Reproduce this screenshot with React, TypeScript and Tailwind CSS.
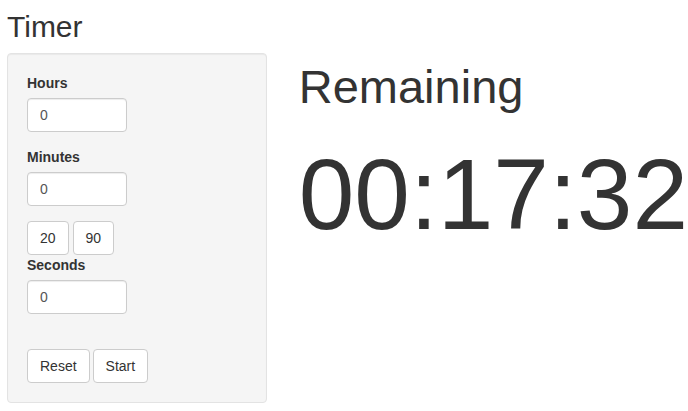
import { useState } from "react";

function NumField({ label, value }: { label: string; value: string }) {
  return (
    <div className="pb-[15px]">
      <label className="block font-bold leading-5 mb-[5px]">{label}</label>
      <input
        type="number"
        defaultValue={value}
        className="block w-[100px] h-[34px] px-3 border border-[#ccc] rounded bg-white text-[#555] shadow-[inset_0_1px_1px_rgba(0,0,0,0.075)] outline-none [appearance:textfield] [&::-webkit-inner-spin-button]:appearance-none"
      />
    </div>
  );
}

function Btn({ children }: { children: React.ReactNode }) {
  return (
    <button className="h-[34px] px-3 border border-[#ccc] rounded bg-white text-[#333] leading-5">
      {children}
    </button>
  );
}

export default function App() {
  const [left] = useState("00:17:32");

  return (
    <div
      className="w-[688px] h-[411px] overflow-hidden bg-white text-[#333] text-sm"
      style={{ fontFamily: '"Liberation Sans", Arial, sans-serif' }}
    >
      <h2 className="text-[30px] leading-[1.1] mt-[10px] mb-[10px] pl-[7px]">Timer</h2>
      <div className="flex items-start">
        <div className="ml-[7px] w-[260px] p-[19px] bg-[#f5f5f5] border border-[#e3e3e3] rounded shadow-[inset_0_1px_1px_rgba(0,0,0,0.05)]">
          <NumField label="Hours" value="0" />
          <NumField label="Minutes" value="0" />
          <div className="flex gap-1">
            <Btn>20</Btn>
            <Btn>90</Btn>
          </div>
          <NumField label="Seconds" value="0" />
          <div className="flex gap-[3px] pt-5">
            <Btn>Reset</Btn>
            <Btn>Start</Btn>
          </div>
        </div>
        <div className="ml-[32px] whitespace-nowrap">
          <div className="text-[47px] leading-none mt-[10px]">Remaining</div>
          <div className="text-[100px] leading-none mt-[34px]">{left}</div>
        </div>
      </div>
    </div>
  );
}
